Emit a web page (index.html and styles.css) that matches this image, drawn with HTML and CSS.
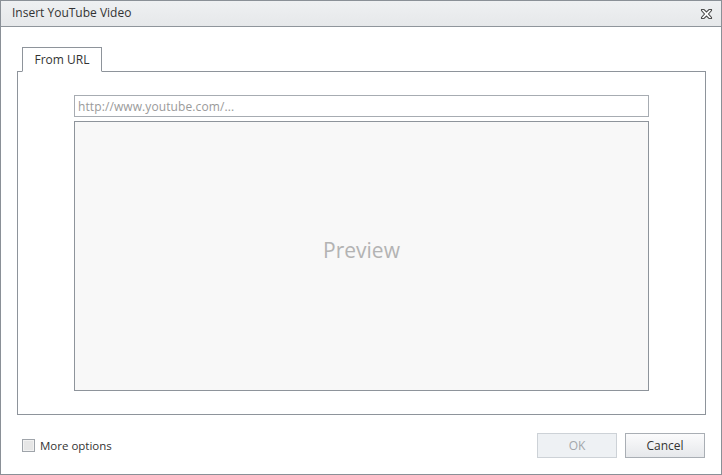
FILE: index.html
```html
<!DOCTYPE html>
<html>
<head>
<meta charset="utf-8">
<link rel="stylesheet" href="styles.css">
</head>
<body>
<div class="dialog">
  <div class="titlebar">
    <span class="title">Insert YouTube Video</span>
    <span class="close" aria-label="Close">
      <svg width="13" height="12" viewBox="0 0 13 12">
        <path d="M1.5 1.5 H4 L6.5 4 L9 1.5 H11.5 V2.5 L8.5 6 L11.5 9.5 V10.5 H9 L6.5 8 L4 10.5 H1.5 V9.5 L4.5 6 L1.5 2.5 Z" fill="#fff" stroke="#4f4f4f" stroke-width="1.1"/>
      </svg>
    </span>
  </div>
  <div class="content">
    <div class="tabs">
      <div class="tab active">From URL</div>
    </div>
    <div class="panel">
      <div class="url">http://www.youtube.com/...</div>
      <div class="preview">Preview</div>
    </div>
  </div>
  <div class="footer">
    <label class="check"><span class="box"></span><span class="check-label">More options</span></label>
    <div class="buttons">
      <button class="btn disabled">OK</button>
      <button class="btn">Cancel</button>
    </div>
  </div>
</div>
</body>
</html>
```
FILE: styles.css
```css
html, body {
  margin: 0;
  padding: 0;
  background: #fff;
}
body {
  font-family: "Segoe UI", "Open Sans", "Noto Sans", sans-serif;
  font-size: 12px;
  color: #333;
}
.dialog {
  box-sizing: border-box;
  width: 722px;
  height: 475px;
  border: 1px solid #8a9097;
  display: flex;
  flex-direction: column;
  background: #fff;
}
.titlebar {
  height: 25px;
  border-bottom: 1px solid #8f959b;
  background: linear-gradient(#eef0f2, #e6e8ea);
  display: flex;
  align-items: center;
  justify-content: space-between;
  padding: 0 8px 0 11px;
}
.title {
  font-size: 12px;
  color: #333;
  line-height: 1;
  padding-bottom: 1px;
}
.close {
  display: flex;
  width: 13px;
  height: 12px;
  margin-top: 1px;
}
.content {
  padding: 20px 15px 0 16px;
}
.tabs {
  display: flex;
  padding-left: 5px;
  margin-bottom: -1px;
}
.tab {
  box-sizing: border-box;
  width: 80px;
  height: 25px;
  border: 1px solid #8e949b;
  border-bottom: 1px solid #fff;
  background: #fff;
  display: flex;
  align-items: center;
  justify-content: center;
  font-size: 12px;
  color: #333;
  position: relative;
  z-index: 1;
  padding-bottom: 1px;
}
.panel {
  box-sizing: border-box;
  height: 344px;
  border: 1px solid #8e949b;
  padding: 23px 56px 23px 56px;
  display: flex;
  flex-direction: column;
  gap: 4px;
}
.url {
  box-sizing: border-box;
  height: 22px;
  border: 1px solid #a7acb2;
  padding: 0 3px;
  display: flex;
  align-items: center;
  color: #9a9a9a;
  font-size: 12px;
  letter-spacing: 0.1px;
}
.preview {
  box-sizing: border-box;
  flex: 1;
  border: 1px solid #8e949b;
  background: #f8f8f8;
  display: flex;
  align-items: center;
  justify-content: center;
  color: #b3b3b3;
  font-size: 21px;
  padding-bottom: 12px;
}
.footer {
  flex: 1;
  display: flex;
  align-items: flex-start;
  justify-content: space-between;
  padding: 18px 16px 0 21px;
}
.check {
  display: flex;
  align-items: center;
  gap: 5px;
  margin-top: 5px;
}
.box {
  box-sizing: border-box;
  width: 13px;
  height: 13px;
  border: 1px solid #9fa4aa;
  background: #e6e6e6;
  box-shadow: inset 0 0 0 1px #f2f2f2;
}
.check-label {
  font-size: 11.5px;
  color: #333;
}
.buttons {
  display: flex;
  gap: 8px;
}
.btn {
  box-sizing: border-box;
  width: 80px;
  height: 25px;
  border: 1px solid #a9aeb4;
  background: linear-gradient(#fbfbfc, #e6e8eb);
  font-family: "Segoe UI", "Open Sans", "Noto Sans", sans-serif;
  font-size: 12px;
  color: #333;
  padding: 0;
  margin: 0;
}
.btn.disabled {
  border-color: #cdd2d7;
  background: #eef1f4;
  color: #a3a7ab;
}
```
